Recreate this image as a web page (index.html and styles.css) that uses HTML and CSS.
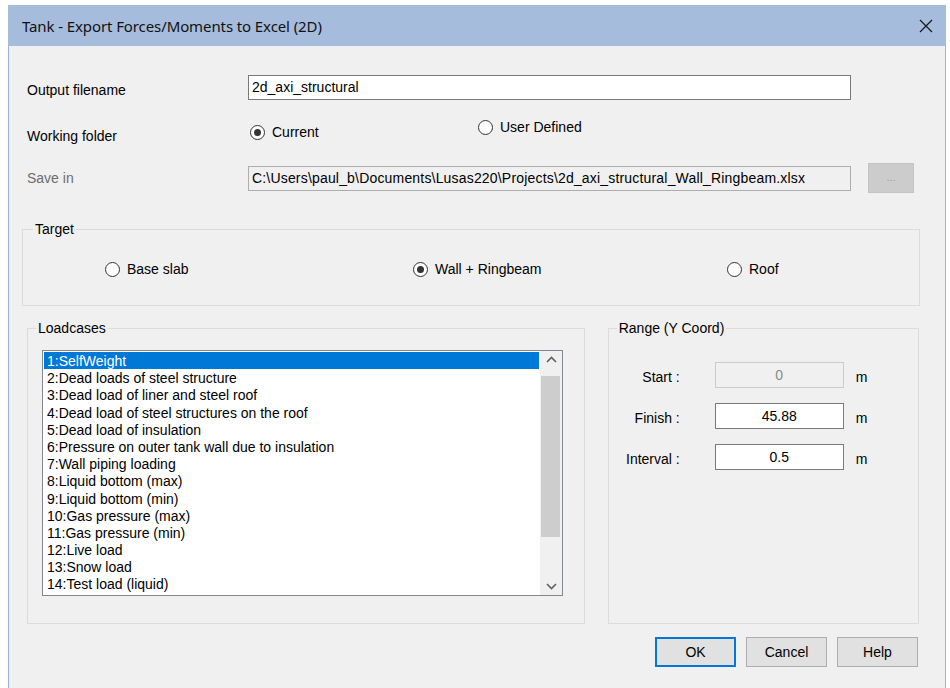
FILE: index.html
```html
<!DOCTYPE html>
<html lang="en">
<head>
<meta charset="utf-8">
<title>Tank - Export Forces/Moments to Excel (2D)</title>
<link rel="stylesheet" href="styles.css">
</head>
<body>
<div class="window">
  <div class="titlebar">
    <span class="title">Tank - Export Forces/Moments to Excel (2D)</span>
    <svg class="close" width="14" height="14" viewBox="0 0 14 14"><path d="M1 1 L13 13 M13 1 L1 13" stroke="#1a1a1a" stroke-width="1.3" fill="none"/></svg>
  </div>
  <div class="client">
    <div class="row row-file">
      <span class="lbl lbl-file">Output filename</span>
      <div class="textbox wide">2d_axi_structural</div>
    </div>
    <div class="row row-folder">
      <span class="lbl lbl-folder">Working folder</span>
      <span class="radio checked r-current"><i class="dot"></i>Current</span>
      <span class="radio r-user"><i class="dot"></i>User Defined</span>
    </div>
    <div class="row row-save">
      <span class="lbl muted">Save in</span>
      <div class="textbox wide readonly path">C:\Users\paul_b\Documents\Lusas220\Projects\2d_axi_structural_Wall_Ringbeam.xlsx</div>
      <div class="browse">...</div>
    </div>

    <fieldset class="group target">
      <legend>Target</legend>
      <div class="target-opts">
        <span class="radio t-base"><i class="dot"></i>Base slab</span>
        <span class="radio checked t-wall"><i class="dot"></i>Wall + Ringbeam</span>
        <span class="radio"><i class="dot"></i>Roof</span>
      </div>
    </fieldset>

    <div class="lower">
      <fieldset class="group loadcases">
        <legend>Loadcases</legend>
        <div class="listbox">
          <ul class="items">
            <li class="sel">1:SelfWeight</li>
            <li>2:Dead loads of steel structure</li>
            <li>3:Dead load of liner and steel roof</li>
            <li>4:Dead load of steel structures on the roof</li>
            <li>5:Dead load of insulation</li>
            <li>6:Pressure on outer tank wall due to insulation</li>
            <li>7:Wall piping loading</li>
            <li>8:Liquid bottom (max)</li>
            <li>9:Liquid bottom (min)</li>
            <li>10:Gas pressure (max)</li>
            <li>11:Gas pressure (min)</li>
            <li>12:Live load</li>
            <li>13:Snow load</li>
            <li>14:Test load (liquid)</li>
          </ul>
          <div class="vscroll">
            <svg class="arrow" width="19" height="17" viewBox="0 0 19 17"><path d="M5 11 L9.5 6.5 L14 11" stroke="#606060" stroke-width="1.6" fill="none"/></svg>
            <div class="track"><div class="thumb"></div></div>
            <svg class="arrow" width="19" height="17" viewBox="0 0 19 17"><path d="M5 6 L9.5 10.5 L14 6" stroke="#606060" stroke-width="1.6" fill="none"/></svg>
          </div>
        </div>
      </fieldset>

      <fieldset class="group range">
        <legend>Range (Y Coord)</legend>
        <div class="range-rows">
          <div class="rrow">
            <span class="rlbl">Start :</span>
            <div class="numbox readonly">0</div>
            <span class="unit">m</span>
          </div>
          <div class="rrow">
            <span class="rlbl">Finish :</span>
            <div class="numbox">45.88</div>
            <span class="unit">m</span>
          </div>
          <div class="rrow">
            <span class="rlbl">Interval :</span>
            <div class="numbox">0.5</div>
            <span class="unit">m</span>
          </div>
        </div>
      </fieldset>
    </div>

    <div class="buttons">
      <div class="btn default">OK</div>
      <div class="btn">Cancel</div>
      <div class="btn">Help</div>
    </div>
  </div>
</div>
</body>
</html>
```

FILE: styles.css
```css
* { box-sizing: border-box; }

html, body {
  margin: 0;
  padding: 0;
  background: #ffffff;
}

body {
  padding: 5px 0 0 8px;
  font-family: "Liberation Sans", Arial, sans-serif;
  font-size: 14px;
  color: #000;
}

.window {
  width: 938px;
  height: 683px;
  display: flex;
  flex-direction: column;
}

/* caption bar */
.titlebar {
  height: 41px;
  flex: none;
  background: #a6bcdd;
  display: flex;
  align-items: center;
  padding: 0 13px 0 14px;
}
.title {
  font-family: "Noto Sans", "Open Sans", sans-serif;
  font-size: 15px;
  color: #111;
  flex: 1;
  letter-spacing: -0.1px;
  padding-top: 1px;
}
.close { display: block; margin-top: 1px; }

/* dialog client area */
.client {
  flex: 1;
  background: #f0f0f0;
  border-left: 1px solid #9db3d6;
  border-right: 1px solid #9db3d6;
  padding: 29px 26px 0 18px;
  display: flex;
  flex-direction: column;
}

.row {
  display: flex;
  align-items: center;
}
.lbl {
  width: 221px;
  flex: none;
  line-height: 16px;
}
.lbl-file { margin-top: 4px; }
.muted { color: #6d6d6d; }

.textbox {
  height: 25px;
  border: 1px solid #7a7a7a;
  background: #fff;
  padding: 0 3px;
  line-height: 23px;
  white-space: nowrap;
  overflow: hidden;
}
.textbox.wide { width: 603px; }
.textbox.readonly {
  background: #f0f0f0;
  border-color: #adadad;
  color: #000;
}
.path { letter-spacing: 0.18px; }

.row-folder {
  margin-top: 18px;
  height: 27px;
  align-items: flex-start;
}
.lbl-folder { margin-top: 10px; }
.r-current { width: 228px; margin-top: 6px; margin-left: 2px; }
.r-user { margin-top: 1px; }

.row-save { margin-top: 18px; height: 30px; }
.browse {
  width: 46px;
  height: 30px;
  margin-left: 17px;
  background: #cccccc;
  border: 1px solid #c4c4c4;
  color: #a0a0a0;
  font-size: 11px;
  text-align: center;
  line-height: 26px;
}

/* radio buttons */
.radio {
  display: inline-flex;
  align-items: center;
  line-height: 16px;
  white-space: nowrap;
}
.dot {
  width: 15px;
  height: 15px;
  border: 1px solid #333;
  border-radius: 50%;
  background: #fff;
  margin-right: 7px;
  flex: none;
  position: relative;
}
.radio.checked .dot::after {
  content: "";
  position: absolute;
  left: 3px;
  top: 3px;
  width: 7px;
  height: 7px;
  border-radius: 50%;
  background: #333;
}

/* group boxes */
.group {
  margin: 0;
  padding: 0;
  border: 1px solid #dcdcdc;
  min-width: 0;
}
.group legend {
  padding: 0 2px;
  margin-left: 8px;
  line-height: 16px;
}

.target {
  margin-top: 28px;
  margin-left: -5px;
  width: 898px;
  height: 85px;
}
.target legend { margin-left: 10px; }
.target-opts {
  display: flex;
  padding: 24px 0 0 82px;
}
.t-base { width: 308px; }
.t-wall { width: 314px; }

.lower {
  display: flex;
  gap: 23px;
  margin-top: 14px;
}
.loadcases {
  width: 559px;
  height: 304px;
}
.range {
  width: 312px;
  height: 304px;
}

/* list box */
.listbox {
  margin: 14px 0 0 14px;
  width: 521px;
  height: 246px;
  border: 1px solid #828790;
  background: #fff;
  display: flex;
}
.items {
  list-style: none;
  margin: 0;
  padding: 1px 1px 0 1px;
  flex: 1;
  overflow: hidden;
}
.items li {
  height: 17.2px;
  line-height: 19px;
  padding-left: 3px;
  white-space: nowrap;
}
.items li.sel {
  background: #0078d7;
  color: #fff;
  line-height: 18px;
}
.vscroll {
  width: 22px;
  flex: none;
  background: #f0f0f0;
  display: flex;
  flex-direction: column;
  align-items: center;
}
.arrow { display: block; flex: none; }
.track {
  flex: 1;
  width: 100%;
  padding: 8px 2px 0 1px;
}
.thumb {
  height: 161px;
  background: #cdcdcd;
}

/* range inputs */
.range-rows {
  padding-top: 26px;
  display: flex;
  flex-direction: column;
  gap: 15px;
}
.rrow {
  display: flex;
  align-items: center;
  height: 26px;
}
.rlbl {
  width: 71px;
  text-align: right;
  flex: none;
  padding-top: 3px;
}
.numbox {
  margin-left: 35px;
  width: 129px;
  height: 26px;
  border: 1px solid #7a7a7a;
  background: #fff;
  text-align: center;
  line-height: 24px;
}
.numbox.readonly {
  background: #f0f0f0;
  border-color: #cccccc;
  color: #8a8a8a;
}
.unit { margin-left: 12px; padding-top: 3px; }

/* dialog buttons */
.buttons {
  display: flex;
  justify-content: flex-end;
  gap: 10px;
  margin-top: 13px;
  padding-right: 1px;
}
.btn {
  width: 81px;
  height: 30px;
  background: #e1e1e1;
  border: 1px solid #adadad;
  text-align: center;
  line-height: 28px;
}
.btn.default {
  border-color: #0078d7;
  box-shadow: inset 0 0 0 1px #0078d7;
}
```
